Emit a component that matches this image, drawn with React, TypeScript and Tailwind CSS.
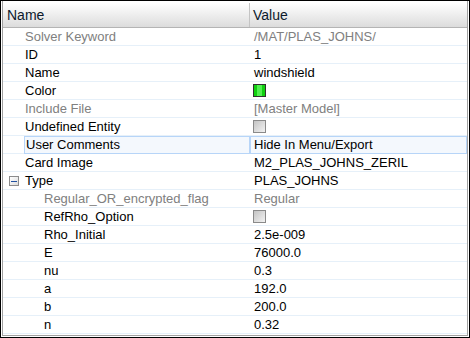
import React from "react";

type Row = {
  name: string;
  value?: string;
  kind?: "text" | "check" | "color";
  level: 0 | 1;
  gray?: boolean;
  grayValue?: boolean;
  selected?: boolean;
  expander?: boolean;
};

const rows: Row[] = [
  { name: "Solver Keyword", value: "/MAT/PLAS_JOHNS/", level: 0, gray: true, grayValue: true },
  { name: "ID", value: "1", level: 0 },
  { name: "Name", value: "windshield", level: 0 },
  { name: "Color", kind: "color", level: 0 },
  { name: "Include File", value: "[Master Model]", level: 0, gray: true, grayValue: true },
  { name: "Undefined Entity", kind: "check", level: 0 },
  { name: "User Comments", value: "Hide In Menu/Export", level: 0, selected: true },
  { name: "Card Image", value: "M2_PLAS_JOHNS_ZERIL", level: 0 },
  { name: "Type", value: "PLAS_JOHNS", level: 0, expander: true },
  { name: "Regular_OR_encrypted_flag", value: "Regular", level: 1, gray: true, grayValue: true },
  { name: "RefRho_Option", kind: "check", level: 1 },
  { name: "Rho_Initial", value: "2.5e-009", level: 1 },
  { name: "E", value: "76000.0", level: 1 },
  { name: "nu", value: "0.3", level: 1 },
  { name: "a", value: "192.0", level: 1 },
  { name: "b", value: "200.0", level: 1 },
  { name: "n", value: "0.32", level: 1 },
];

function CheckBox() {
  return (
    <div className="w-[13px] h-[13px] border border-[#8a8a8a] bg-gradient-to-br from-[#c4c4c4] to-[#f2f2f2]" />
  );
}

function ColorSwatch() {
  return (
    <div className="w-[13px] h-[13px] border border-[#303030] bg-[#10d010] flex justify-center">
      <div className="w-[5px] h-full bg-[#50f050]" />
    </div>
  );
}

function Minus() {
  return (
    <div className="absolute left-[6px] top-[4px] w-[10px] h-[10px] border border-[#8c8c8c] bg-gradient-to-br from-white to-[#dcdcdc] flex items-center justify-center">
      <div className="w-[6px] h-[1px] bg-[#2050a0]" />
    </div>
  );
}

export default function App() {
  return (
    <div className="w-[470px] h-[338px] border border-black bg-white overflow-hidden font-['Liberation_Sans',Arial,sans-serif] text-[13px] text-black">
      <div className="h-[335px] mx-[1px] border-l border-r border-b border-[#a0a0a0] pt-[2px] flex flex-col">
        <div className="h-[25px] flex border-b border-[#b4b4b4] bg-gradient-to-b from-white to-[#dcdcdc] shrink-0">
          <div className="w-[247px] border-r border-[#c4c4c4] pl-[4px] flex items-center text-[14px] text-[#0c1a2c]">
            Name
          </div>
          <div className="flex-1 pl-[3px] flex items-center text-[14px] text-[#0c1a2c]">Value</div>
        </div>
        {rows.map((r, i) => (
          <div key={i} className="h-[18px] flex border-b border-[#e6f0f9] shrink-0">
            <div className="w-[247px] relative">
              {r.expander && <Minus />}
              {r.selected ? (
                <div className="ml-[21px] h-[18px] border border-[#b7d5f8] bg-[#f4f8fd] pl-[1px] leading-[16px] whitespace-nowrap">
                  {r.name}
                </div>
              ) : (
                <div
                  className={
                    (r.level === 0 ? "pl-[22px] " : "pl-[41px] ") +
                    "leading-[18px] whitespace-nowrap " +
                    (r.gray ? "text-[#808080]" : "text-black")
                  }
                >
                  {r.name}
                </div>
              )}
            </div>
            <div className="flex-1">
              {r.selected ? (
                <div className="h-[18px] border border-[#b7d5f8] bg-[#f4f8fd] pl-[3px] leading-[16px] whitespace-nowrap">
                  {r.value}
                </div>
              ) : r.kind === "check" ? (
                <div className="pl-[3px] pt-[2px]">
                  <CheckBox />
                </div>
              ) : r.kind === "color" ? (
                <div className="pl-[3px] pt-[2px]">
                  <ColorSwatch />
                </div>
              ) : (
                <div
                  className={
                    "pl-[4px] leading-[18px] whitespace-nowrap " +
                    (r.grayValue ? "text-[#808080]" : "text-black")
                  }
                >
                  {r.value}
                </div>
              )}
            </div>
          </div>
        ))}
      </div>
    </div>
  );
}
